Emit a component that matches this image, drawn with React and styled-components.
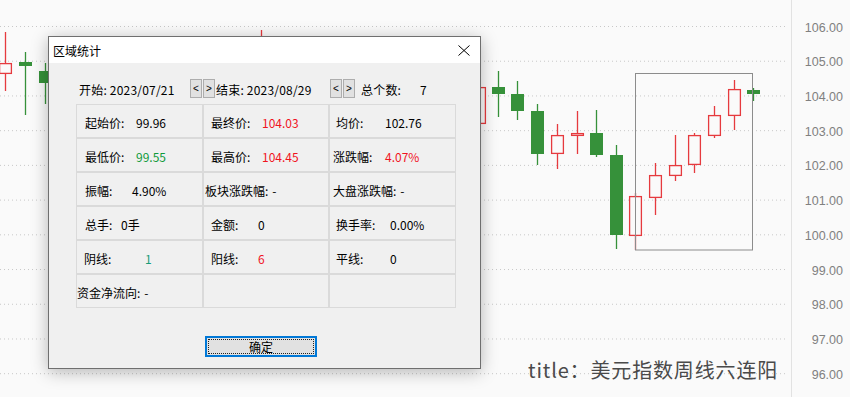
import React from 'react';
import styled, { createGlobalStyle } from 'styled-components';

const GlobalStyle = createGlobalStyle`
  body {
    margin: 0;
    background: #fafafa;
    font-family: "Noto Sans CJK SC", "Liberation Sans", sans-serif;
  }
`;

const Screen = styled.div`
  position: relative;
  width: 850px;
  height: 397px;
  overflow: hidden;
  background: #fafafa;
  display: flex;
`;

const Plot = styled.div`
  width: 791px;
  height: 100%;
`;

const Axis = styled.div`
  flex: 1;
  border-left: 1.5px solid #e2e2e2;
  display: flex;
  flex-direction: column;
  padding-top: 10.6px;
`;

const AxisLabel = styled.div`
  height: 34.72px;
  line-height: 34.72px;
  text-align: right;
  padding-right: 7px;
  font-family: "Liberation Sans", sans-serif;
  font-size: 12.5px;
  color: #808080;
`;

const ChartTitle = styled.div`
  position: absolute;
  left: 528px;
  top: 357px;
  font-size: 20px;
  letter-spacing: 0.85px;
  line-height: 26px;
  color: #4a4a4a;
  white-space: nowrap;
`;

const Dialog = styled.div`
  position: absolute;
  left: 48px;
  top: 36px;
  width: 433px;
  height: 333px;
  box-sizing: border-box;
  border: 1px solid #6f6f6f;
  background: #f0f0f0;
  box-shadow: 0 3px 16px rgba(0, 0, 0, 0.28);
  display: flex;
  flex-direction: column;
`;

const TitleBar = styled.div`
  height: 26px;
  background: #fff;
  display: flex;
  align-items: center;
  justify-content: space-between;
  padding: 0 10px 0 4px;
  font-size: 12px;
  color: #000;
`;

const Body = styled.div`
  flex: 1;
  display: flex;
  flex-direction: column;
  padding-top: 15px;
  font-size: 12px;
  color: #000;
`;

const HeaderRow = styled.div`
  display: flex;
  align-items: center;
  height: 20px;
  padding-left: 30px;
`;

const Field = styled.div`
  width: ${({ w }) => w}px;
  margin-left: ${({ ml }) => ml || 0}px;
  white-space: nowrap;
  padding-top: 2px;
  letter-spacing: 0.2px;
`;

const NavButton = styled.div`
  width: 12px;
  height: 19px;
  box-sizing: border-box;
  margin-left: ${({ ml }) => ml || 0}px;
  border: 1px solid #adadad;
  background: #e1e1e1;
  display: flex;
  align-items: center;
  justify-content: center;
  font-family: "Liberation Sans", sans-serif;
  font-size: 10px;
`;

const Grid = styled.div`
  display: grid;
  grid-template-columns: 127px 126px 127px;
  grid-auto-rows: 34px;
  margin: 6px 0 0 27px;
  width: 380px;
`;

const Cell = styled.div`
  box-sizing: border-box;
  border: 1px solid #dadada;
  display: flex;
  align-items: center;
  padding: 3px 0 0 ${({ pad }) => pad}px;
  white-space: nowrap;
`;

const Label = styled.span`
  display: inline-block;
  width: ${({ w }) => (w ? `${w}px` : 'auto')};
  margin-right: ${({ w }) => (w ? 0 : 4)}px;
`;

const Value = styled.span`
  color: ${({ tone }) => tone || '#000'};
`;

const ButtonRow = styled.div`
  margin-top: 28px;
  padding-left: 156px;
`;

const OkButton = styled.div`
  position: relative;
  width: 112px;
  height: 21px;
  box-sizing: border-box;
  border: 2px solid #0078d7;
  background: #e1e1e1;
  display: flex;
  align-items: center;
  justify-content: center;
  font-size: 12px;

  &::before {
    content: '';
    position: absolute;
    inset: 1px;
    border: 1px dotted #222;
  }
`;

const RED = '#f0141e';
const GREEN = '#0f9a3a';
const TEAL = '#189c78';

const cells = [
  { pad: 8, lw: 51, label: '起始价:', value: '99.96' },
  { pad: 7, lw: 51, label: '最终价:', value: '104.03', tone: RED },
  { pad: 6, lw: 49, label: '均价:', value: '102.76' },
  { pad: 8, lw: 51, label: '最低价:', value: '99.55', tone: GREEN },
  { pad: 7, lw: 51, label: '最高价:', value: '104.45', tone: RED },
  { pad: 3, lw: 52, label: '涨跌幅:', value: '4.07%', tone: RED },
  { pad: 8, lw: 47, label: '振幅:', value: '4.90%' },
  { pad: 1, label: '板块涨跌幅:', value: '-' },
  { pad: 3, label: '大盘涨跌幅:', value: '-' },
  { pad: 8, lw: 36, label: '总手:', value: '0手' },
  { pad: 7, lw: 47, label: '金额:', value: '0' },
  { pad: 6, lw: 54, label: '换手率:', value: '0.00%' },
  { pad: 7, lw: 61, label: '阴线:', value: '1', tone: TEAL },
  { pad: 7, lw: 47, label: '阳线:', value: '6', tone: RED },
  { pad: 6, lw: 54, label: '平线:', value: '0' },
  { pad: 0, label: '资金净流向:', value: '-' },
  { pad: 0, lw: 1, label: '', value: '' },
  { pad: 0, lw: 1, label: '', value: '' },
];

const prices = ['106.00', '105.00', '104.00', '103.00', '102.00', '101.00', '100.00', '99.00', '98.00', '97.00', '96.00'];

// body left, body top, body bottom, high, low, up (red hollow) or down (green)
const candles = [
  { x: -1, t: 63, b: 74, h: 32, l: 91, up: true },
  { x: 19, t: 62, b: 66, h: 52, l: 115 },
  { x: 39, t: 71, b: 83, h: 63, l: 104 },
  { x: 255, t: 40, b: 60, h: 30, l: 70, up: true },
  { x: 473, t: 87, b: 124, h: 80, l: 130, up: true },
  { x: 492, t: 87, b: 94, h: 71, l: 117 },
  { x: 511, t: 94, b: 111, h: 81, l: 120 },
  { x: 531, t: 111, b: 154, h: 104, l: 165 },
  { x: 551, t: 135, b: 154, h: 124, l: 169, up: true },
  { x: 571, t: 133, b: 136, h: 111, l: 154, up: true },
  { x: 590, t: 133, b: 155, h: 110, l: 157 },
  { x: 610, t: 155, b: 235, h: 145, l: 249 },
  { x: 629, t: 196, b: 236, h: 193, l: 250, up: true },
  { x: 649, t: 175, b: 198, h: 163, l: 215, up: true },
  { x: 669, t: 165, b: 176, h: 135, l: 181, up: true },
  { x: 688, t: 135, b: 165, h: 133, l: 173, up: true },
  { x: 708, t: 115, b: 136, h: 106, l: 138, up: true },
  { x: 728, t: 89, b: 116, h: 80, l: 130, up: true },
  { x: 747, t: 90, b: 94, h: 88, l: 101 },
];

const Chart = () => (
  <svg width="791" height="397" viewBox="0 0 791 397">
    {prices.map((p, i) => {
      const y = 26.5 + i * 34.72;
      return (
        <line key={p} x1="0" x2="788" y1={y} y2={y} stroke="#c8c8c8" strokeWidth="1" strokeDasharray="1 3" />
      );
    })}
    {candles.map((c, i) => {
      const color = c.up ? '#e63a3e' : '#36913a';
      const cx = c.x + 6.5;
      return (
        <g key={i}>
          <line x1={cx} x2={cx} y1={c.h} y2={c.l} stroke={color} strokeWidth="1.3" />
          {c.up ? (
            <rect x={c.x + 0.6} y={c.t + 0.6} width="11.8" height={c.b - c.t - 1.2} fill="#fafafa" stroke={color} strokeWidth="1.3" />
          ) : (
            <rect x={c.x} y={c.t} width="13" height={Math.max(c.b - c.t, 3)} fill={color} />
          )}
        </g>
      );
    })}
    <rect x="635.5" y="73.5" width="117" height="176.5" fill="none" stroke="#8c8c8c" strokeWidth="1" />
  </svg>
);

const CloseIcon = () => (
  <svg width="12" height="11" viewBox="0 0 12 11">
    <path d="M0.5 0.5 L11.5 10.5 M11.5 0.5 L0.5 10.5" stroke="#000" strokeWidth="1" fill="none" />
  </svg>
);

export default function App() {
  return (
    <>
      <GlobalStyle />
      <Screen>
        <Plot>
          <Chart />
        </Plot>
        <Axis>
          {prices.map((p) => (
            <AxisLabel key={p}>{p}</AxisLabel>
          ))}
        </Axis>
        <ChartTitle>title：美元指数周线六连阳</ChartTitle>

        <Dialog>
          <TitleBar>
            <span>区域统计</span>
            <CloseIcon />
          </TitleBar>
          <Body>
            <HeaderRow>
              <Field w={111}>开始: 2023/07/21</Field>
              <NavButton>&lt;</NavButton>
              <NavButton ml={1}>&gt;</NavButton>
              <Field w={114} ml={1}>结束: 2023/08/29</Field>
              <NavButton>&lt;</NavButton>
              <NavButton ml={1}>&gt;</NavButton>
              <Field w={59} ml={6}>总个数:</Field>
              <Field w={20}>7</Field>
            </HeaderRow>
            <Grid>
              {cells.map((c, i) => (
                <Cell key={i} pad={c.pad}>
                  <Label w={c.lw}>{c.label}</Label>
                  <Value tone={c.tone}>{c.value}</Value>
                </Cell>
              ))}
            </Grid>
            <ButtonRow>
              <OkButton>确定</OkButton>
            </ButtonRow>
          </Body>
        </Dialog>
      </Screen>
    </>
  );
}
